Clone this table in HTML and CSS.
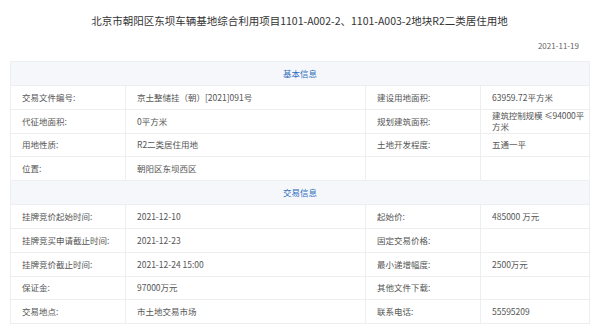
FILE: index.html
```html
<!DOCTYPE html>
<html lang="zh">
<head>
<meta charset="utf-8">
<link rel="stylesheet" href="styles.css">
</head>
<body>
<div class="page">
  <h1 class="title">北京市朝阳区东坝车辆基地综合利用项目1101-A002-2、1101-A003-2地块R2二类居住用地</h1>
  <div class="date">2021-11-19</div>
  <table class="info">
    <colgroup>
      <col class="c1"><col class="c2"><col class="c3"><col class="c4">
    </colgroup>
    <tr class="sec"><td colspan="4">基本信息</td></tr>
    <tr><td>交易文件编号:</td><td>京土整储挂（朝）[2021]091号</td><td>建设用地面积:</td><td>63959.72平方米</td></tr>
    <tr><td>代征地面积:</td><td>0平方米</td><td>规划建筑面积:</td><td class="tight">建筑控制规模 ≤94000平方米</td></tr>
    <tr><td>用地性质:</td><td>R2二类居住用地</td><td>土地开发程度:</td><td>五通一平</td></tr>
    <tr><td>位置:</td><td>朝阳区东坝西区</td><td></td><td></td></tr>
    <tr class="sec"><td colspan="4">交易信息</td></tr>
    <tr><td>挂牌竞价起始时间:</td><td>2021-12-10</td><td>起始价:</td><td>485000 万元</td></tr>
    <tr><td>挂牌竞买申请截止时间:</td><td>2021-12-23</td><td>固定交易价格:</td><td></td></tr>
    <tr><td>挂牌竞价截止时间:</td><td>2021-12-24 15:00</td><td>最小递增幅度:</td><td>2500万元</td></tr>
    <tr><td>保证金:</td><td>97000万元</td><td>其他文件下载:</td><td></td></tr>
    <tr><td>交易地点:</td><td>市土地交易市场</td><td>联系电话:</td><td>55595209</td></tr>
  </table>
</div>
</body>
</html>
```

FILE: styles.css
```css
html, body {
  margin: 0;
  padding: 0;
  background: #ffffff;
}
body {
  font-family: "Microsoft YaHei", "Noto Sans CJK SC", "Liberation Sans", sans-serif;
  color: #555;
}
.page {
  padding: 0 11px 0 10px;
}
.title {
  margin: 0;
  padding-top: 13px;
  height: 16px;
  font-size: 10.5px;
  line-height: 16px;
  font-weight: normal;
  text-align: center;
  color: #333;
}
.date {
  margin-top: 12px;
  height: 10px;
  font-size: 8px;
  line-height: 10px;
  text-align: right;
  color: #666;
  padding-right: 10px;
}
.info {
  margin-top: 10px;
  width: 579px;
  border-collapse: collapse;
  table-layout: fixed;
  font-size: 8.5px;
}
.c1 { width: 115px; }
.c2 { width: 240px; }
.c3 { width: 115px; }
.c4 { width: 109px; }
.info td {
  border: 1px solid #eceef2;
  height: 22.8px;
  padding: 0 6px 0 11px;
  line-height: 11px;
  vertical-align: middle;
  color: #555;
}
.info td.tight {
  padding-right: 1px;
  letter-spacing: -0.1px;
}
.info tr.sec td {
  background: #f5f7fa;
  color: #2f6fbf;
  text-align: center;
  padding: 0;
  height: 23px;
}
```
